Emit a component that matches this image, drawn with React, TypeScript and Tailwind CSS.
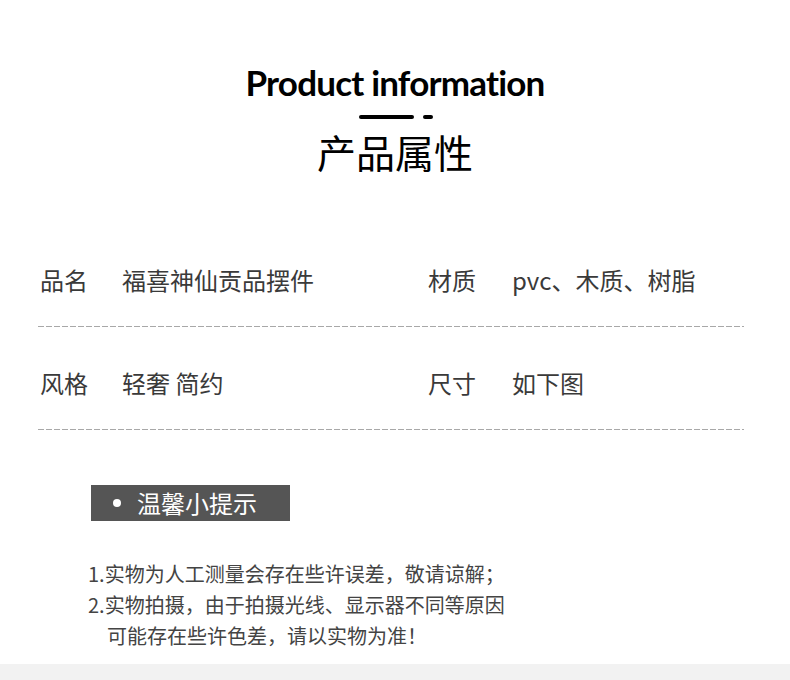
import React from "react";

const cjk = { fontFamily: '"Noto Sans CJK SC", "Noto Sans", sans-serif' };

function Dash() {
  return (
    <div className="ml-[38px] w-[706px] h-px bg-[repeating-linear-gradient(to_right,#a8a8a8_0_6px,transparent_6px_8px)]" />
  );
}

function Row({ a, b, c, d }: { a: string; b: string; c: string; d: string }) {
  return (
    <div className="flex items-center h-[46px] text-[24px] text-[#3a3a3a]" style={cjk}>
      <div className="w-[428px] shrink-0 flex pl-[40px]">
        <span className="w-[82px]">{a}</span>
        <span>{b}</span>
      </div>
      <div className="flex">
        <span className="w-[84px]">{c}</span>
        <span>{d}</span>
      </div>
    </div>
  );
}

export default function App() {
  return (
    <div className="w-[790px] h-[680px] bg-white flex flex-col overflow-hidden">
      <div className="flex flex-col items-center pt-[62px]">
        <div
          className="text-[35px] font-bold leading-[40px] text-black tracking-[-0.8px]"
          style={{ fontFamily: '"Lato", "Open Sans", sans-serif' }}
        >
          Product information
        </div>
        <div className="flex items-center gap-[9px] mt-[13px] ml-[2px]">
          <div className="w-[55px] h-[4px] rounded-full bg-black" />
          <div className="w-[10px] h-[4px] rounded-full bg-black" />
        </div>
        <div className="text-[39px] leading-[48px] text-black mt-[8px]" style={cjk}>
          产品属性
        </div>
      </div>
      <div className="mt-[82px]">
        <Row a="品名" b="福喜神仙贡品摆件" c="材质" d="pvc、木质、树脂" />
      </div>
      <div className="mt-[23px]">
        <Dash />
      </div>
      <div className="mt-[33px]">
        <Row a="风格" b="轻奢 简约" c="尺寸" d="如下图" />
      </div>
      <div className="mt-[23px]">
        <Dash />
      </div>
      <div className="ml-[91px] mt-[55px] w-[199px] h-[36px] bg-[#555555] flex items-center text-white" style={cjk}>
        <span className="ml-[22px] w-[8px] h-[8px] rounded-full bg-white" />
        <span className="ml-[16px] text-[24px] leading-none">温馨小提示</span>
      </div>
      <div className="ml-[88px] mt-[37px] text-[20px] leading-[31px] text-[#444]" style={cjk}>
        <div>1.实物为人工测量会存在些许误差，敬请谅解；</div>
        <div>2.实物拍摄，由于拍摄光线、显示器不同等原因</div>
        <div className="pl-[19px]">可能存在些许色差，请以实物为准！</div>
      </div>
      <div className="flex-1" />
      <div className="h-[16px] bg-[#f2f2f2]" />
    </div>
  );
}
